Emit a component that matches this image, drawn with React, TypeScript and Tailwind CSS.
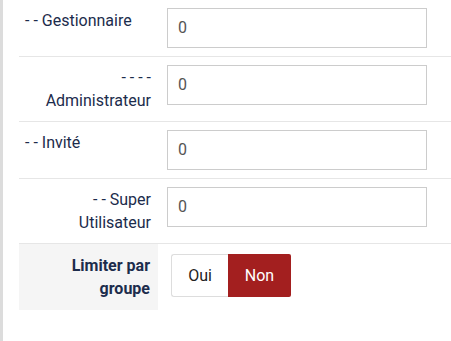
import React from "react";

const rows: { label: React.ReactNode; align: "left" | "right" }[] = [
  { label: "- - Gestionnaire", align: "left" },
  { label: <>- - - -<br />Administrateur</>, align: "right" },
  { label: "- - Invité", align: "left" },
  { label: <>- - Super<br />Utilisateur</>, align: "right" },
];

export default function App() {
  return (
    <div
      className="w-[451px] h-[341px] bg-white overflow-hidden border-l-[3px] border-[#dcdcdc] pl-[16px]"
      style={{ fontFamily: "Roboto, 'Liberation Sans', sans-serif" }}
    >
      {rows.map((r, i) => (
        <div key={i} className="flex border-b border-[#e6e6e6] py-[8px] w-[440px]">
          <div
            className={
              "w-[139px] shrink-0 pt-[1px] pb-[1px] text-[16px] leading-[23px] text-[#1c2c4c] " +
              (r.align === "left" ? "text-left pl-[6px]" : "text-right pr-[7px]")
            }
          >
            {r.label}
          </div>
          <div className="pl-[9px]">
            <div className="w-[260px] h-[40px] border border-[#cccccc] flex items-center pl-[10px] text-[16px] text-[#555555]">
              0
            </div>
          </div>
        </div>
      ))}
      <div className="flex w-[440px]">
        <div className="w-[139px] shrink-0 bg-[#f5f5f5] pt-[10px] pb-[10px] pr-[8px] text-right text-[16px] leading-[23px] font-bold text-[#1c2c4c]">
          Limiter par
          <br />
          groupe
        </div>
        <div className="pl-[13px] pt-[10px]">
          <div className="flex h-[43px] text-[16px]">
            <div className="w-[57px] flex items-center justify-center border border-[#dddddd] border-r-0 rounded-l-[3px] text-[#222222] bg-white">
              Oui
            </div>
            <div className="w-[63px] flex items-center justify-center bg-[#a31f1f] text-white rounded-r-[2px]">
              Non
            </div>
          </div>
        </div>
      </div>
    </div>
  );
}
